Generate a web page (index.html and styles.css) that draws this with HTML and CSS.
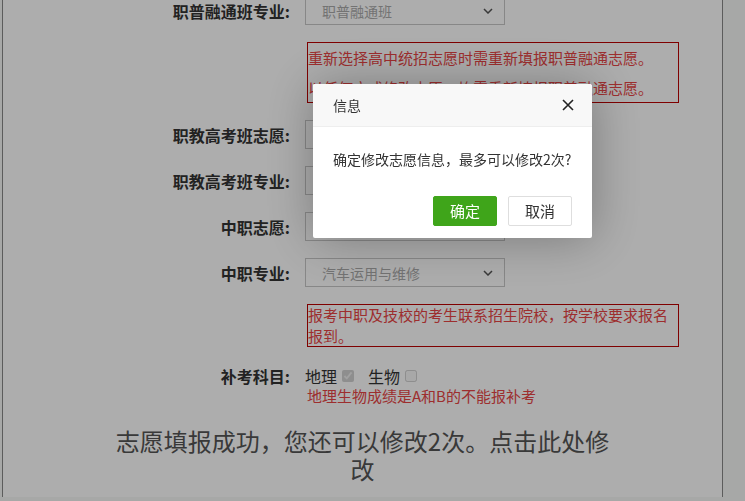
FILE: index.html
```html
<!DOCTYPE html>
<html lang="zh-CN">
<head>
    <meta charset="UTF-8">
    <meta name="viewport" content="width=device-width, initial-scale=1.0">
    <title>志愿填报</title>
    <link rel="stylesheet" href="styles.css">
</head>
<body>
    <div class="page">
        <div class="form">
            <div class="row">
                <span class="label">职普融通班专业:</span>
                <span class="select-wrap">
                    <select class="select" disabled><option>职普融通班</option></select>
                    <svg class="chevron" width="10" height="6" viewBox="0 0 10 6"><path d="M1 1l4 4 4-4" fill="none" stroke="#555" stroke-width="1.5"/></svg>
                </span>
            </div>

            <div class="tip tip-wide">
                <p>重新选择高中统招志愿时需重新填报职普融通志愿。</p>
                <p>以任何方式修改志愿，均需重新填报职普融通志愿。</p>
            </div>

            <div class="row">
                <span class="label">职教高考班志愿:</span>
                <span class="select-wrap">
                    <select class="select" disabled><option>请选择</option></select>
                    <svg class="chevron" width="10" height="6" viewBox="0 0 10 6"><path d="M1 1l4 4 4-4" fill="none" stroke="#555" stroke-width="1.5"/></svg>
                </span>
            </div>

            <div class="row">
                <span class="label">职教高考班专业:</span>
                <span class="select-wrap">
                    <select class="select" disabled><option>请选择</option></select>
                    <svg class="chevron" width="10" height="6" viewBox="0 0 10 6"><path d="M1 1l4 4 4-4" fill="none" stroke="#555" stroke-width="1.5"/></svg>
                </span>
            </div>

            <div class="row">
                <span class="label">中职志愿:</span>
                <span class="select-wrap">
                    <select class="select" disabled><option>请选择</option></select>
                    <svg class="chevron" width="10" height="6" viewBox="0 0 10 6"><path d="M1 1l4 4 4-4" fill="none" stroke="#555" stroke-width="1.5"/></svg>
                </span>
            </div>

            <div class="row">
                <span class="label">中职专业:</span>
                <span class="select-wrap">
                    <select class="select" disabled><option>汽车运用与维修</option></select>
                    <svg class="chevron" width="10" height="6" viewBox="0 0 10 6"><path d="M1 1l4 4 4-4" fill="none" stroke="#555" stroke-width="1.5"/></svg>
                </span>
            </div>

            <div class="tip tip-tight">报考中职及技校的考生联系招生院校，按学校要求报名报到。</div>

            <div class="row row-text">
                <span class="label">补考科目:</span>
                <span class="checks">
                    <label class="check">地理 <input type="checkbox" checked disabled></label>
                    <label class="check">生物 <input type="checkbox" disabled></label>
                </span>
            </div>
            <div class="note">地理生物成绩是A和B的不能报补考</div>

            <div class="done">志愿填报成功，您还可以修改2次。点击此处修改</div>
        </div>
    </div>

    <div class="shade"></div>

    <div class="dialog">
        <div class="dialog-title">
            信息
            <svg class="close" width="12" height="12" viewBox="0 0 12 12"><path d="M1 1l10 10M11 1L1 11" stroke="#222" stroke-width="1.6"/></svg>
        </div>
        <div class="dialog-body">确定修改志愿信息，最多可以修改2次?</div>
        <div class="dialog-btns">
            <a class="btn btn-ok">确定</a>
            <a class="btn">取消</a>
        </div>
    </div>
</body>
</html>
```

FILE: styles.css
```css
body {
    margin: 0;
    background-color: #f6f8f6;
    font-family: "Noto Sans CJK SC", "Liberation Sans", sans-serif;
    color: #333;
    overflow: hidden;
}
.page {
    margin-left: 2px;
    width: 719px;
    min-height: 100vh;
    background: #fff;
    border-left: 1px solid #888;
    border-right: 1px solid #888;
}
.form {
    margin-top: -4px;
}
.row {
    display: grid;
    grid-template-columns: 287px 200px;
    column-gap: 15px;
    align-items: center;
    height: 29px;
    margin-bottom: 17px;
}
.label {
    text-align: right;
    font-size: 16px;
    font-weight: bold;
    color: #333;
    line-height: 20px;
}
.select-wrap {
    position: relative;
    display: block;
    height: 29px;
}
.select {
    -webkit-appearance: none;
    appearance: none;
    width: 200px;
    height: 29px;
    border: 1px solid #c8c8c8;
    background: #fff;
    color: #aaa;
    font-family: inherit;
    font-size: 14px;
    padding: 0 0 0 16px;
    opacity: 1;
}
.chevron {
    position: absolute;
    right: 12px;
    top: 12px;
}
.tip {
    margin-left: 304px;
    width: 370px;
    border: 1px solid #b00;
    color: #e84545;
    font-size: 15px;
    margin-bottom: 17px;
}
.tip p {
    margin: 0;
    line-height: 29.5px;
}
.tip-tight {
    line-height: 20.5px;
    margin-bottom: 0;
}
.row-text {
    height: 18px;
    margin-top: 19px;
    margin-bottom: 0;
}
.checks {
    display: flex;
    gap: 14px;
    font-size: 16px;
    line-height: 18px;
}
.check {
    display: flex;
    align-items: center;
    gap: 5px;
}
.check input {
    width: 12px;
    height: 12px;
    margin: 0;
}
.note {
    margin-left: 304px;
    margin-top: 3px;
    color: #e84545;
    font-size: 15px;
    line-height: 18px;
}
.done {
    width: 500px;
    margin: 22px auto 0;
    text-align: center;
    font-size: 24px;
    line-height: 28px;
    color: #555;
}
.shade {
    position: fixed;
    top: 0;
    left: 0;
    right: 0;
    bottom: 0;
    background: rgba(0, 0, 0, 0.32);
}
.dialog {
    position: fixed;
    left: 313px;
    top: 84px;
    width: 279px;
    background: #fff;
    border-radius: 2px;
    box-shadow: 1px 1px 50px rgba(0, 0, 0, 0.3);
    font-size: 14px;
}
.dialog-title {
    position: relative;
    height: 42px;
    line-height: 42px;
    padding-left: 20px;
    background: #f8f8f8;
    border-bottom: 1px solid #eee;
    color: #333;
    border-radius: 2px 2px 0 0;
}
.close {
    position: absolute;
    right: 18px;
    top: 15px;
}
.dialog-body {
    padding: 20px;
    line-height: 24px;
    color: #333;
}
.dialog-btns {
    display: flex;
    justify-content: flex-end;
    gap: 11px;
    padding: 5px 20px 12px;
}
.btn {
    height: 28px;
    line-height: 28px;
    padding: 0 16px;
    border: 1px solid #dedede;
    background: #fff;
    color: #333;
    border-radius: 2px;
    font-size: 15px;
}
.btn-ok {
    background: #3fa51a;
    border-color: #3fa51a;
    color: #fff;
}
```
